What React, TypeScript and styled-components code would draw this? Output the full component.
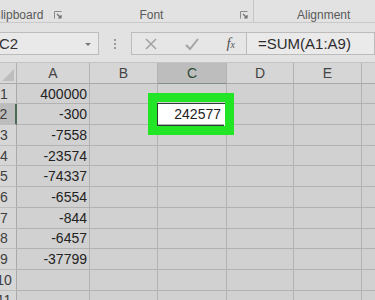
import styled, { createGlobalStyle } from 'styled-components';

const GlobalStyle = createGlobalStyle`
  html, body {
    margin: 0;
    padding: 0;
    background: #d1d1d1;
    overflow: hidden;
  }
  * {
    box-sizing: border-box;
  }
`;

const columns = [
  { name: 'A', width: 73 },
  { name: 'B', width: 68 },
  { name: 'C', width: 69 },
  { name: 'D', width: 67 },
  { name: 'E', width: 68 },
  { name: '', width: 40 },
];

const values: Record<number, string> = {
  1: '400000',
  2: '-300',
  3: '-7558',
  4: '-23574',
  5: '-74337',
  6: '-6554',
  7: '-844',
  8: '-6457',
  9: '-37799',
};

const rows = Array.from({ length: 11 }, (_, i) => i + 1);

const Launcher = () => (
  <svg width="8" height="8" viewBox="0 0 8 8">
    <path d="M0.5 0.5H7.5M0.5 0.5V7.5" stroke="#8a8a8a" strokeWidth="1" fill="none" />
    <path d="M3 3L7 7M4 7H7V4" stroke="#6f6f6f" strokeWidth="1.2" fill="none" />
  </svg>
);

const App = () => {
  return (
    <>
      <GlobalStyle />
      <Page>
        <Ribbon>
          <Group style={{ width: 253 }}>
            <GroupLabel indent={-8} gap={11}>
              Clipboard
              <Launcher />
            </GroupLabel>
            <GroupLabel indent={77} gap={77}>
              Font
              <Launcher />
            </GroupLabel>
          </Group>
          <Divider />
          <Group style={{ flex: 1 }}>
            <GroupLabel indent={43} gap={0}>
              Alignment
            </GroupLabel>
          </Group>
        </Ribbon>

        <FormulaRow>
          <NameBox>
            <span>C2</span>
            <Caret />
          </NameBox>
          <Dots>
            <i />
            <i />
            <i />
          </Dots>
          <ActionBox>
            <svg width="14" height="14" viewBox="0 0 14 14">
              <path d="M2 2L12 12M12 2L2 12" stroke="#a3a3a3" strokeWidth="1.6" />
            </svg>
            <svg width="16" height="14" viewBox="0 0 16 14">
              <path d="M2 8L6 12L14 2" stroke="#a3a3a3" strokeWidth="2" fill="none" />
            </svg>
            <Fx>
              f<sub>x</sub>
            </Fx>
          </ActionBox>
          <FormulaInput>=SUM(A1:A9)</FormulaInput>
        </FormulaRow>

        <Sheet cols={columns.map((c) => c.width)}>
          <Corner>
            <svg width="12" height="12" viewBox="0 0 12 12">
              <path d="M12 0V12H0Z" fill="#bdbdbd" />
            </svg>
          </Corner>
          {columns.map((c) => (
            <ColHeader key={c.name || 'x'} active={c.name === 'C'}>
              {c.name}
            </ColHeader>
          ))}
          {rows.map((r) => (
            <Row key={r}>
              <RowHeader active={r === 2}>{r}</RowHeader>
              {columns.map((c) => {
                const selected = r === 2 && c.name === 'C';
                return (
                  <Cell key={c.name || 'x'} selected={selected}>
                    {c.name === 'A' && values[r]}
                    {selected && (
                      <>
                        242577
                        <FillHandle />
                        <Highlight />
                      </>
                    )}
                  </Cell>
                );
              })}
            </Row>
          ))}
        </Sheet>
      </Page>
    </>
  );
};

export default App;

const Page = styled.div`
  width: 375px;
  height: 300px;
  overflow: hidden;
  background: #d1d1d1;
  font-family: 'Liberation Sans', Arial, sans-serif;
`;

const Ribbon = styled.div`
  display: flex;
  height: 23px;
  background: #e2e2e2;
  border-bottom: 1px solid #c9c9c9;
`;

const Group = styled.div`
  display: flex;
  align-items: center;
  height: 100%;
`;

const GroupLabel = styled.div<{ indent: number; gap: number }>`
  display: flex;
  align-items: center;
  gap: ${({ gap }) => gap}px;
  margin-left: ${({ indent }) => indent}px;
  padding-top: 7px;
  font-size: 12px;
  color: #5a5a5a;
  white-space: nowrap;
`;

const Divider = styled.div`
  width: 1px;
  height: 100%;
  background: #c6c6c6;
`;

const FormulaRow = styled.div`
  display: flex;
  align-items: center;
  height: 39px;
  padding-top: 2px;
  background: #e2e2e2;
`;

const NameBox = styled.div`
  display: flex;
  align-items: center;
  justify-content: space-between;
  width: 108px;
  height: 23px;
  margin-left: -9px;
  padding: 0 7px 0 7px;
  background: #e9e9e9;
  border: 1px solid #bcbcbc;
  font-size: 15px;
  color: #333;
`;

const Caret = styled.span`
  width: 0;
  height: 0;
  margin-top: 2px;
  border-left: 3px solid transparent;
  border-right: 3px solid transparent;
  border-top: 3px solid #777;
`;

const Dots = styled.div`
  display: flex;
  flex-direction: column;
  gap: 2px;
  margin: 0 15px 0 15px;
  i {
    width: 2px;
    height: 2px;
    background: #9a9a9a;
  }
`;

const ActionBox = styled.div`
  display: flex;
  align-items: center;
  justify-content: space-between;
  width: 116px;
  height: 23px;
  padding: 0 11px 0 12px;
  background: #e6e6e6;
  border: 1px solid #bcbcbc;
`;

const Fx = styled.span`
  font-family: 'Liberation Serif', 'Times New Roman', serif;
  font-style: italic;
  font-size: 15px;
  color: #555;
  sub {
    font-size: 10px;
    vertical-align: 0;
  }
`;

const FormulaInput = styled.div`
  flex: 1;
  display: flex;
  align-items: center;
  height: 23px;
  padding-left: 11px;
  background: #eaeaea;
  border: 1px solid #bcbcbc;
  border-left: none;
  font-size: 15px;
  color: #2d2d2d;
`;

const Sheet = styled.div<{ cols: number[] }>`
  display: grid;
  grid-template-columns: 28px ${({ cols }) => cols.map((w) => `${w}px`).join(' ')};
  grid-auto-rows: 20.7px;
  margin-left: -11px;
  border-top: 1px solid #c4c4c4;
`;

const Corner = styled.div`
  display: flex;
  align-items: flex-end;
  justify-content: flex-end;
  height: 21px;
  padding: 0 2px 2px 0;
  background: #d8d8d8;
  border-right: 1px solid #b0b0b0;
  border-bottom: 1px solid #aaa;
`;

const ColHeader = styled.div<{ active?: boolean }>`
  display: flex;
  align-items: center;
  justify-content: center;
  height: 21px;
  font-size: 14px;
  color: ${({ active }) => (active ? '#2f4a35' : '#444')};
  background: ${({ active }) => (active ? '#bdbdbd' : '#d6d6d6')};
  border-right: 1px solid #b3b3b3;
  border-bottom: 1px solid ${({ active }) => (active ? '#7f8f84' : '#a9a9a9')};
`;

const Row = styled.div`
  display: contents;
`;

const RowHeader = styled.div<{ active?: boolean }>`
  display: flex;
  align-items: center;
  justify-content: center;
  padding-left: 3px;
  font-size: 14px;
  color: #3e3e3e;
  background: ${({ active }) => (active ? '#bcbcbc' : '#d6d6d6')};
  border-bottom: 1px solid #bdbdbd;
  border-right: ${({ active }) => (active ? '2px solid #4b6a55' : '1px solid #aaa')};
`;

const Cell = styled.div<{ selected?: boolean }>`
  position: relative;
  z-index: ${({ selected }) => (selected ? 2 : 'auto')};
  display: flex;
  align-items: center;
  justify-content: flex-end;
  padding-right: ${({ selected }) => (selected ? 5 : 2)}px;
  font-size: 14px;
  color: #232323;
  background: ${({ selected }) => (selected ? '#ffffff' : '#d1d1d1')};
  border-right: 1px solid #b2b2b2;
  border-bottom: 1px solid #b2b2b2;
  outline: ${({ selected }) => (selected ? '1.5px solid #2d3b31' : 'none')};
`;

const FillHandle = styled.span`
  position: absolute;
  right: -3px;
  bottom: -3px;
  width: 5px;
  height: 5px;
  background: #2f4a37;
  border: 1px solid #fff;
`;

const Highlight = styled.span`
  position: absolute;
  top: -11px;
  left: -10px;
  right: -8px;
  bottom: -11px;
  border: 9px solid #22e525;
  pointer-events: none;
`;
